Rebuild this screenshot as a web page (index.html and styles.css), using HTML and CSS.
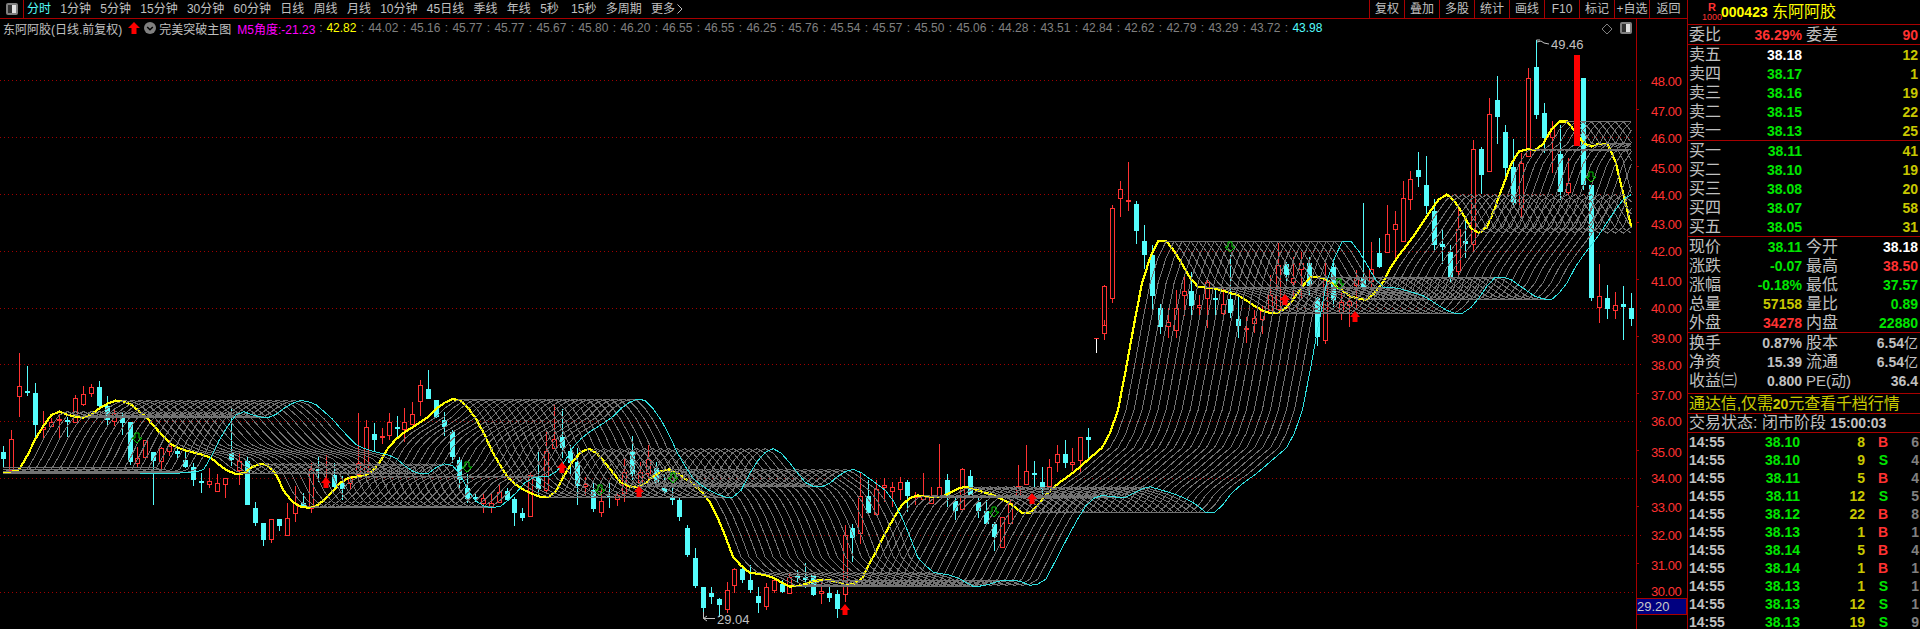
FILE: index.html
```html
<!DOCTYPE html>
<html lang="zh-CN">
<head>
<meta charset="utf-8">
<title>东阿阿胶 K线</title>
<link rel="stylesheet" href="styles.css">
</head>
<body>
<div class="app">
  <main class="main">
    <header class="topbar">
      <button class="panel-toggle" aria-label="toggle">
        <svg width="12" height="12" viewBox="0 0 12 12"><rect class="ico-frame" x="0" y="0" width="12" height="12" rx="2"/><rect class="ico-dark" x="2" y="2" width="4" height="8"/><rect class="ico-light" x="6" y="2" width="4" height="8"/></svg>
      </button>
      <nav class="tabs">
        <span class="tab active">分时</span><span class="tab">1分钟</span><span class="tab">5分钟</span><span class="tab">15分钟</span><span class="tab">30分钟</span><span class="tab">60分钟</span><span class="tab">日线</span><span class="tab">周线</span><span class="tab">月线</span><span class="tab">10分钟</span><span class="tab">45日线</span><span class="tab">季线</span><span class="tab">年线</span><span class="tab tab-sec">5秒</span><span class="tab">15秒</span><span class="tab">多周期</span>
        <span class="tab">更多<svg class="chev" width="6" height="10" viewBox="0 0 6 10"><path d="M0.5 0.5 L5 5 L0.5 9.5"/></svg></span>
      </nav>
      <div class="tools">
        <span class="tool">复权</span><span class="tool">叠加</span><span class="tool">多股</span><span class="tool">统计</span><span class="tool">画线</span><span class="tool">F10</span><span class="tool">标记</span><span class="tool">+自选</span><span class="tool tool-last">返回</span>
      </div>
    </header>
    <section class="chart">
      <svg id="kline" class="kline" viewBox="0 19 1687 610" width="1687" height="610"></svg>
      <div class="info">
        <span class="info-name">东阿阿胶(日线.前复权)</span>
        <svg class="info-arrow" width="12" height="12" viewBox="0 0 12 12"><path d="M6 0 L12 6 L8.5 6 L8.5 12 L3.5 12 L3.5 6 L0 6 Z"/></svg>
        <svg class="info-circle" width="12" height="12" viewBox="0 0 12 12"><circle cx="6" cy="6" r="6"/><path d="M3.2 5 L6 7.8 L8.8 5"/></svg>
        <span class="info-name">完美突破主图</span>
        <span class="m5">M5角度:-21.23</span><span class="sep m5-sep">:</span><span class="v y">42.82</span>
        <span class="sep">:</span><span class="v">44.02</span><span class="sep">:</span><span class="v">45.16</span><span class="sep">:</span><span class="v">45.77</span><span class="sep">:</span><span class="v">45.77</span><span class="sep">:</span><span class="v">45.67</span><span class="sep">:</span><span class="v">45.80</span><span class="sep">:</span><span class="v">46.20</span><span class="sep">:</span><span class="v">46.55</span><span class="sep">:</span><span class="v">46.55</span><span class="sep">:</span><span class="v">46.25</span><span class="sep">:</span><span class="v">45.76</span><span class="sep">:</span><span class="v">45.54</span><span class="sep">:</span><span class="v">45.57</span><span class="sep">:</span><span class="v">45.50</span><span class="sep">:</span><span class="v">45.06</span><span class="sep">:</span><span class="v">44.28</span><span class="sep">:</span><span class="v">43.51</span><span class="sep">:</span><span class="v">42.84</span><span class="sep">:</span><span class="v">42.62</span><span class="sep">:</span><span class="v">42.79</span><span class="sep">:</span><span class="v">43.29</span><span class="sep">:</span><span class="v">43.72</span><span class="sep">:</span><span class="v c">43.98</span>
      </div>
    </section>
  </main>
  <aside class="panel">
    <div class="head">
      <div class="mark"><span class="mark-r">R</span><span class="mark-n">1000</span></div>
      <span class="code">000423</span><span class="name">东阿阿胶</span>
    </div>
    <div class="block block-one">
      <div class="row"><span class="k">委比</span><span class="n red">36.29%</span><span class="k k2">委差</span><span class="n red">90</span></div>
    </div>
    <div class="block">
      <div class="row"><span class="k">卖五</span><span class="n white">38.18</span><span></span><span class="n olive">12</span></div>
      <div class="row"><span class="k">卖四</span><span class="n green">38.17</span><span></span><span class="n olive">1</span></div>
      <div class="row"><span class="k">卖三</span><span class="n green">38.16</span><span></span><span class="n olive">19</span></div>
      <div class="row"><span class="k">卖二</span><span class="n green">38.15</span><span></span><span class="n olive">22</span></div>
      <div class="row"><span class="k">卖一</span><span class="n green">38.13</span><span></span><span class="n olive">25</span></div>
    </div>
    <div class="block">
      <div class="row"><span class="k">买一</span><span class="n green">38.11</span><span></span><span class="n olive">41</span></div>
      <div class="row"><span class="k">买二</span><span class="n green">38.10</span><span></span><span class="n olive">19</span></div>
      <div class="row"><span class="k">买三</span><span class="n green">38.08</span><span></span><span class="n olive">20</span></div>
      <div class="row"><span class="k">买四</span><span class="n green">38.07</span><span></span><span class="n olive">58</span></div>
      <div class="row"><span class="k">买五</span><span class="n green">38.05</span><span></span><span class="n olive">31</span></div>
    </div>
    <div class="block">
      <div class="row"><span class="k">现价</span><span class="n green">38.11</span><span class="k k2">今开</span><span class="n white">38.18</span></div>
      <div class="row"><span class="k">涨跌</span><span class="n green">-0.07</span><span class="k k2">最高</span><span class="n red">38.50</span></div>
      <div class="row"><span class="k">涨幅</span><span class="n green">-0.18%</span><span class="k k2">最低</span><span class="n green">37.57</span></div>
      <div class="row"><span class="k">总量</span><span class="n olive">57158</span><span class="k k2">量比</span><span class="n green">0.89</span></div>
      <div class="row"><span class="k">外盘</span><span class="n red">34278</span><span class="k k2">内盘</span><span class="n green">22880</span></div>
    </div>
    <div class="block block-fin">
      <div class="row"><span class="k">换手</span><span class="n silver">0.87%</span><span class="k k2">股本</span><span class="n silver">6.54<i class="unit">亿</i></span></div>
      <div class="row"><span class="k">净资</span><span class="n silver">15.39</span><span class="k k2">流通</span><span class="n silver">6.54<i class="unit">亿</i></span></div>
      <div class="row"><span class="k">收益㈢</span><span class="n silver">0.800</span><span class="k k2 k-pe">PE(动)</span><span class="n silver">36.4</span></div>
    </div>
    <div class="promo">通达信,仅需<b>20</b>元查看千档行情</div>
    <div class="status">交易状态: 闭市阶段 <b>15:00:03</b></div>
    <div class="trades">
      <div class="t"><span class="n silver">14:55</span><span class="n green">38.10</span><span class="n olive">8</span><span class="n red">B</span><span class="n grey">6</span></div>
      <div class="t"><span class="n silver">14:55</span><span class="n green">38.10</span><span class="n olive">9</span><span class="n green">S</span><span class="n grey">4</span></div>
      <div class="t"><span class="n silver">14:55</span><span class="n green">38.11</span><span class="n olive">5</span><span class="n red">B</span><span class="n grey">4</span></div>
      <div class="t"><span class="n silver">14:55</span><span class="n green">38.11</span><span class="n olive">12</span><span class="n green">S</span><span class="n grey">5</span></div>
      <div class="t"><span class="n silver">14:55</span><span class="n green">38.12</span><span class="n olive">22</span><span class="n red">B</span><span class="n grey">8</span></div>
      <div class="t"><span class="n silver">14:55</span><span class="n green">38.13</span><span class="n olive">1</span><span class="n red">B</span><span class="n grey">1</span></div>
      <div class="t"><span class="n silver">14:55</span><span class="n green">38.14</span><span class="n olive">5</span><span class="n red">B</span><span class="n grey">4</span></div>
      <div class="t"><span class="n silver">14:55</span><span class="n green">38.14</span><span class="n olive">1</span><span class="n red">B</span><span class="n grey">1</span></div>
      <div class="t"><span class="n silver">14:55</span><span class="n green">38.13</span><span class="n olive">1</span><span class="n green">S</span><span class="n grey">1</span></div>
      <div class="t"><span class="n silver">14:55</span><span class="n green">38.13</span><span class="n olive">12</span><span class="n green">S</span><span class="n grey">1</span></div>
      <div class="t"><span class="n silver">14:55</span><span class="n green">38.13</span><span class="n olive">19</span><span class="n green">S</span><span class="n grey">9</span></div>
    </div>
  </aside>
</div>
<script src="chart.js"></script>
</body>
</html>
```
FILE: styles.css
```css
* { box-sizing: border-box; }
html, body { margin: 0; height: 100%; background: #000; overflow: hidden; }
body { font-family: "Liberation Sans", "Noto Sans CJK SC", sans-serif; color: #c0c0c0; }
.app { display: flex; width: 1920px; height: 629px; overflow: hidden; }
.main { width: 1687px; flex: none; display: flex; flex-direction: column; }

.topbar { display: flex; align-items: center; height: 19px; border-bottom: 1px solid #a80000; font-size: 12px; line-height: 18px; }
.panel-toggle { width: 24px; height: 18px; padding: 0 0 0 1px; background: #000; border: 0; border-right: 1px solid #a80000; display: flex; align-items: center; justify-content: center; }
.ico-frame { fill: #808080; }
.ico-dark { fill: #303030; }
.ico-light { fill: #e0e0e0; }
.tabs { display: flex; gap: 9.3px; padding-left: 3px; white-space: nowrap; }
.tab { color: #c0c0c0; display: inline-flex; align-items: center; }
.tab.active { color: #54fcfc; }
.tab-sec { margin-right: 3px; }
.chev { margin-left: 2px; fill: none; stroke: #c0c0c0; }
.tools { margin-left: auto; display: flex; height: 18px; }
.tool { width: 35px; border-left: 1px solid #a80000; text-align: center; color: #c0c0c0; }
.tool-last { width: 38px; }

.chart { position: relative; flex: 1; }
.kline { display: block; }
.info { position: absolute; left: 3px; top: 1px; display: flex; align-items: center; height: 16px; font-size: 12px; white-space: nowrap; }
.info-name { color: #c0c0c0; }
.info-arrow { margin: 0 4px 0 6px; fill: #ff0000; }
.info-circle { margin-right: 3px; }
.info-circle circle { fill: #808080; }
.info-circle path { fill: none; stroke: #000; stroke-width: 1.5; }
.m5 { color: #ff00ff; margin-left: 6px; }
.v { color: #808080; width: 30px; flex: none; }
.v.y { color: #ffff00; }
.v.c { color: #54fcfc; }
.sep { width: 12px; flex: none; text-align: center; color: #808080; }
.m5-sep { width: 11px; }

.panel { width: 233px; flex: none; border-left: 1px solid #a80000; overflow: hidden; height: 629px; }
.head { height: 25px; border-bottom: 1px solid #a80000; display: flex; align-items: center; padding-left: 15px; color: #ffff00; }
.mark { width: 18px; display: flex; flex-direction: column; align-items: center; color: #ff3232; }
.mark-r { font-size: 11px; line-height: 10px; font-weight: bold; }
.mark-n { font-size: 9px; line-height: 10px; }
.code { font-size: 14px; font-weight: bold; margin-left: 0; width: 51px; }
.name { font-size: 16px; line-height: 20px; }

.block { border-bottom: 1px solid #a80000; }
.block-fin { padding-bottom: 3px; }
.row { display: grid; grid-template-columns: 50px 63px 54px 62px; height: 19px; padding-left: 1px; align-items: center; white-space: nowrap; }
.k { font-size: 16px; line-height: 19px; color: #c0c0c0; }
.k2 { padding-left: 4px; }
.k-pe { font-size: 15px; }
.n { font-size: 14px; line-height: 18px; font-weight: bold; text-align: right; font-style: normal; }
.unit { font-size: 14px; font-weight: normal; font-style: normal; }
.red { color: #ff3232; }
.green { color: #00e600; }
.white { color: #ffffff; }
.olive { color: #c8c800; }
.silver { color: #c0c0c0; }
.grey { color: #808080; }

.promo { height: 20px; padding-left: 1px; border-bottom: 1px solid #a80000; font-size: 16px; line-height: 19px; letter-spacing: -0.1px; color: #c8c800; white-space: nowrap; }
.promo b { font-size: 14px; }
.status { height: 19px; padding-left: 1px; border-bottom: 1px solid #a80000; font-size: 16px; line-height: 18px; color: #c0c0c0; white-space: nowrap; }
.status b { font-size: 14px; }
.trades { display: block; }
.t { display: grid; grid-template-columns: 45px 66px 65px 23px 31px; height: 18px; padding-left: 1px; align-items: center; }
.t .n:first-child { text-align: left; }

.grid { stroke: #a00000; stroke-width: 1; stroke-dasharray: 1 3; fill: none; }
.axis { stroke: #a80000; stroke-width: 1; fill: none; }
.w-up { stroke: #ff3232; stroke-width: 1; }
.w-dn { stroke: #54fcfc; stroke-width: 1; }
.b-up { stroke: #ff3232; stroke-width: 1; fill: #000; }
.b-dn { fill: #54fcfc; }
.b-lim { fill: #ff0000; }
.w-white { stroke: #ffffff; stroke-width: 1; }
.rib { fill: none; stroke: #727272; stroke-width: 1; }
.rib-y { fill: none; stroke: #ffff00; stroke-width: 2.2; }
.rib-c { fill: none; stroke: #30e0e0; stroke-width: 1; }
.ar-up { fill: #ff0000; }
.ar-dn { fill: none; stroke: #00c800; stroke-width: 1; }
.ax-t { fill: #ff3232; font-size: 13px; letter-spacing: -0.45px; font-family: "Liberation Sans", sans-serif; }
.flag-t { fill: #c0c0c0; font-size: 13px; font-family: "Liberation Sans", sans-serif; }
.flag-l { fill: none; stroke: #c0c0c0; stroke-width: 1; }
.px-box { fill: #000080; stroke: #a80000; stroke-width: 1; }
.px-t { fill: #c8c8c8; font-size: 13px; font-family: "Liberation Sans", sans-serif; }
.mini { fill: none; stroke: #808080; stroke-width: 1; }
.mini-f { fill: #808080; }
.mini-d { fill: #303030; }
.mini-l { fill: #e0e0e0; }
```
FILE: chart.js
```js
// Candles traced per region: [zoomX, high, bodyTop, bodyBottom, low, kind] (3x coordinates relative to region origin)
const U = 'u', D = 'd';
const regions = [
  { ox: 0, oy: 340, c: [
    [10,318,336,357,385,D],[34,270,298,390,390,U],[58,40,138,167,230,U],[82,78,153,158,168,D],[106,128,159,255,290,D],
    [130,213,262,267,300,U],[154,235,245,257,262,U],[178,222,238,241,300,U],[202,230,240,243,290,D],[226,165,175,245,245,U],
    [250,138,163,191,198,U],[274,132,142,158,170,U],[298,123,141,198,210,D],[322,168,198,240,255,D],[342,205,220,242,258,U],
    [366,215,235,249,285,D],[390,245,247,365,375,D],[412,320,355,368,380,U],[436,300,301,350,355,U],[460,335,337,362,495,D],
    [484,320,325,362,388,U],[508,300,318,332,348,U],[530,320,333,342,360,D],[554,330,360,380,385,D],[578,370,382,420,438,D],
    [602,400,423,426,460,D],[626,385,424,431,445,U],[650,402,430,452,455,U],[674,415,415,431,475,U],[694,205,340,360,378,D],
    [718,340,363,390,435,U],[742,350,363,495,495,D],[766,487,504,549,558,D],[790,549,549,600,618,D],[814,538,538,597,608,U],
    [838,537,537,558,573,D],[860,490,534,584,584,U],[884,438,490,520,545,U],[908,458,490,497,503,D],[932,370,388,505,518,U],
    [955,350,387,393,425,D],[979,345,395,400,420,U],[1003,370,405,441,445,D],[1025,408,430,447,480,D],[1049,408,415,428,450,U],
    [1073,220,368,402,420,U],[1097,240,262,393,395,U],[1121,250,282,299,335,D],[1145,265,287,292,312,U],[1168,218,247,286,300,U],
    [1190,228,260,263,298,D]
  ]},
  { ox: 380, oy: 380, c: [
    [73,85,127,147,185,U],[97,67,103,132,135,U],[121,0,15,62,108,U],[145,-30,27,56,56,D],[169,60,60,110,115,D],[193,95,121,140,168,D],
    [215,150,157,230,250,D],[238,230,240,300,325,D],[262,283,325,357,370,D],[286,340,352,358,365,D],[310,340,354,368,398,U],
    [334,335,368,380,398,U],[358,310,337,367,370,U],[382,325,334,360,362,D],[403,350,357,398,437,D],[427,385,400,414,422,D],
    [451,280,285,407,410,U],[475,210,292,326,345,D],[499,150,213,330,335,U],[523,75,178,205,205,U],[547,87,170,203,235,D],
    [569,195,213,250,285,D],[592,205,246,318,375,D],[616,290,311,318,345,U],[640,305,330,386,395,D],[664,325,362,395,410,U],
    [688,300,348,354,385,D],[712,335,345,358,378,U],[733,235,275,340,365,U],[757,168,213,282,300,D],[781,245,276,305,312,U],
    [805,195,238,278,300,U],[829,245,265,310,325,D],[853,285,325,335,340,D],[877,320,355,358,375,D]
  ]},
  { ox: 660, oy: 400, c: [
    [58,295,300,350,362,D],[82,375,384,464,470,D],[106,445,475,557,563,D],[130,560,561,624,655,D],[154,560,579,590,612,D],
    [178,595,598,615,650,D],[202,545,571,628,638,U],[223,505,508,556,578,U],[247,500,508,540,550,D],[271,495,540,570,580,D],
    [295,560,588,608,638,D],[319,550,562,617,630,U],[343,530,541,569,578,U],[367,540,553,575,580,D],[388,520,530,578,580,U],
    [412,510,528,533,550,D],[436,490,530,541,565,D],[460,525,525,584,587,D],[484,550,574,579,612,U],[508,555,579,593,605,D],
    [532,570,582,628,653,D],[556,375,406,581,605,U],[577,372,385,414,485,D],[601,215,289,398,432,U],[625,240,288,338,340,D],
    [649,240,268,341,342,U],[673,235,256,262,305,U],[697,245,260,272,320,U],[721,230,247,268,300,U],[742,240,246,288,335,D],
    [766,275,288,292,315,U],[790,220,284,298,300,U],[814,262,292,308,310,U],[838,132,262,292,295,U],[862,222,240,285,322,D],
    [886,290,304,334,360,D],[907,205,208,327,328,U],[931,210,228,285,285,D],[955,290,306,332,355,D],[979,300,334,372,372,D],
    [1003,365,373,410,452,D],[1027,350,352,442,445,U],[1051,300,308,370,372,U],[1073,195,257,292,292,U],[1097,135,213,253,255,U],
    [1121,183,219,222,265,D],[1145,200,247,268,300,D],[1168,178,202,258,265,U],[1192,135,163,187,215,U]
  ]},
  { ox: 1040, oy: 330, c: [
    [76,330,373,398,414,D],[97,354,397,401,422,U],[121,322,322,391,430,U],[145,294,321,330,390,D]
  ]},
  { ox: 1050, oy: 150, c: [
    [163,405,408,548,570,U],[187,165,175,445,458,U],[211,93,118,143,200,U],[233,36,151,154,182,U],[257,152,162,243,282,D],
    [281,225,274,315,357,D],[305,285,316,437,476,D],[329,463,475,530,552,D],[353,475,517,529,565,U],[377,420,475,539,565,U],
    [401,375,424,436,498,U],[422,365,424,467,503,D],[446,435,466,472,503,U],[470,380,397,445,533,U],[494,410,444,447,503,D],
    [518,410,463,488,503,U],[541,315,447,488,503,D],[565,440,507,527,563,D],[587,500,535,538,578,U],[611,480,505,520,550,U],
    [635,465,483,506,552,U],[659,375,435,480,480,U],[683,280,345,478,480,U],[707,335,343,375,405,D],[730,320,385,395,450,U],
    [752,305,340,358,447,U],[776,320,338,408,438,D],[800,440,445,560,588,D],[824,335,390,570,582,U],[848,330,350,450,470,D],
    [872,425,455,487,510,U],[896,435,452,465,530,U],[918,360,380,405,475,U],[940,160,385,415,420,D],[964,275,358,392,423,U],
    [988,265,310,352,355,D]
  ]},
  { ox: 1380, oy: 30, c: [
    [22,525,613,665,665,U],[46,543,583,598,695,U],[70,453,505,632,632,U],[91,423,448,506,540,U],[115,365,420,440,470,D],
    [139,378,465,527,552,D],[163,508,543,645,662,D],[187,595,642,650,702,D],[211,645,666,740,760,D],[235,530,598,722,740,U],
    [256,572,632,642,685,D],[280,330,358,643,670,U],[304,350,357,435,492,D],[328,205,253,422,422,U],[352,138,210,260,342,D],
    [376,285,306,413,445,D],[400,328,412,518,530,D],[424,370,400,530,560,U],[445,115,145,378,380,U],[469,30,110,255,268,D],
    [493,220,250,323,370,D],[517,273,295,322,430,U],[541,285,372,487,510,D],[565,385,460,487,498,U],[610,145,145,465,480,D],
    [634,465,465,803,812,D],[658,703,799,830,878,U],[682,766,805,836,868,D],[706,785,826,841,868,U],[730,768,822,830,930,D],
    [754,790,833,868,888,D]
  ]}
];

// Thick MA line traced in page pixels
const key = [
  [18,471],[23,465],[33,443],[42,428],[50,416],[58,411],[68,415],[80,418],[88,417],[100,408],[112,401],[120,400],[132,405],
  [147,418],[160,433],[173,446],[187,451],[200,454],[210,457],[223,468],[233,474],[243,474],[255,465],[263,463],[273,468],
  [283,490],[295,505],[305,508],[315,507],[328,497],[340,483],[350,477],[367,476],[377,467],[388,448],[400,435],[413,427],
  [427,418],[440,405],[452,399],[460,400],[470,410],[480,425],[493,453],[507,477],[520,488],[530,493],[540,497],[550,497],
  [557,490],[567,470],[577,455],[587,448],[595,451],[607,465],[620,482],[630,487],[640,487],[647,482],[657,473],[667,469],
  [673,470],[687,480],[703,492],[713,507],[723,530],[733,557],[747,572],[770,576],[790,587],[803,585],[817,580],[833,580],
  [847,586],[860,582],[873,557],[887,530],[900,507],[913,495],[940,498],[963,486],[977,490],[993,495],[1010,503],[1023,514],
  [1033,512],[1047,493],[1060,482],[1073,473],[1090,458],[1103,447],[1113,427],[1120,403],[1127,363],[1133,330],[1142,283],
  [1152,252],[1158,241],[1167,241],[1177,255],[1190,278],[1198,287],[1213,288],[1230,293],[1240,296],[1253,305],[1267,313],
  [1277,314],[1290,305],[1300,289],[1311,277],[1323,277],[1337,287],[1353,298],[1367,300],[1380,288],[1393,263],[1413,237],
  [1433,207],[1443,194]
];

const W = 8.02, X0 = 3.3, BARS = 204;
const priceY = p => 80.3 + (48 - p) * 28.4;
const tail = [43.98,43.72,43.29,42.79,42.62,42.84,43.51,44.28,45.06,45.50,45.57,45.54,45.76,46.25,46.55,46.55,46.20,45.80,45.67,45.77,45.77,45.16,44.02,42.82];

function interp(x) {
  if (x <= key[0][0]) return 472;
  for (let j = 1; j < key.length; j++) {
    if (x <= key[j][0]) {
      const [a, b] = key[j - 1], [c, d] = key[j];
      return b + (d - b) * (x - a) / (c - a);
    }
  }
  return key[key.length - 1][1];
}
const yel = [];
for (let i = 0; i < BARS; i++) yel.push(interp(X0 + W * i));
tail.forEach((p, n) => { yel[BARS - tail.length + n] = priceY(p); });

const out = [];
// Grid and axis
for (let p = 30; p <= 48; p++) {
  const y = Math.round(priceY(p)) + 0.5;
  if (p % 2 === 0) out.push(`<line class="grid" x1="0" y1="${y}" x2="1641" y2="${y}"/>`);
  else out.push(`<line class="axis" x1="1636" y1="${y}" x2="1639" y2="${y}"/>`);
}
out.push('<line class="axis" x1="1636.5" y1="19" x2="1636.5" y2="629"/>');

// Candles
function candle(cx, hi, top, bot, lo, kind) {
  const x = Math.round(cx);
  const w = kind === U ? 'w-up' : 'w-dn';
  let s = `<line class="${w}" x1="${x + 0.5}" y1="${hi}" x2="${x + 0.5}" y2="${lo}"/>`;
  const h = Math.max(bot - top, 1);
  if (kind === U) s += `<rect class="b-up" x="${x - 2 + 0.5}" y="${top + 0.5}" width="4" height="${Math.round(h)}"/>`;
  else s += `<rect class="b-dn" x="${x - 2}" y="${top}" width="5" height="${Math.max(Math.round(h), 2)}"/>`;
  return s;
}
const rd = v => Math.round(v);
regions.forEach(r => r.c.forEach(c => {
  out.push(candle(r.ox + c[0] / 3, rd(r.oy + c[1] / 3), rd(r.oy + c[2] / 3), rd(r.oy + c[3] / 3), rd(r.oy + c[4] / 3), c[5]));
}));
// The stray white tick with red cap near x=1096
out.push('<line class="w-white" x1="1096.5" y1="339" x2="1096.5" y2="353"/><line class="w-up" x1="1094" y1="338.5" x2="1099" y2="338.5"/>');
// Small candle that tops the rally gap
out.push(candle(1104, 320, 325, 333, 340, U));

// Ribbon: each line is the previous line delayed by one bar
const pts = (k, start) => {
  const a = [];
  for (let i = start; i < BARS; i++) {
    const y = i >= k ? yel[i - k] : 467 + (k % 4) * 2;
    a.push(`${(X0 + W * i).toFixed(1)},${y.toFixed(1)}`);
  }
  return a.join(' ');
};
out.push(`<polyline class="rib-y" shape-rendering="crispEdges" points="${pts(0, 0)}"/>`);
for (let k = 1; k <= 22; k++) out.push(`<polyline class="rib" shape-rendering="crispEdges" points="${pts(k, 0)}"/>`);
out.push(`<polyline class="rib-c" shape-rendering="crispEdges" points="${pts(23, 17)}"/>`);

// Limit-up bar sits on top of the lines
out.push('<rect class="b-lim" x="1574" y="55" width="6" height="91"/>');

// Markers
const redUp = (x, y) => `<path class="ar-up" d="M${x} ${y - 6} L${x + 5} ${y} L${x + 2.5} ${y} L${x + 2.5} ${y + 5} L${x - 2.5} ${y + 5} L${x - 2.5} ${y} L${x - 5} ${y} Z"/>`;
const grnDn = (x, y) => `<path class="ar-dn" d="M${x - 2} ${y - 5} L${x + 2} ${y - 5} L${x + 2} ${y} L${x + 5} ${y} L${x} ${y + 5} L${x - 5} ${y} L${x - 2} ${y} Z"/>`;
[[326,483],[562,468],[639,492],[845,610],[1032,499],[1285,300],[1355,317]].forEach(p => out.push(redUp(p[0], p[1])));
[[137,438],[467,467],[600,490],[673,478],[994,512],[1230,247],[1339,284],[1591,177]].forEach(p => out.push(grnDn(p[0], p[1])));

// Axis labels
const labels = { 48:81, 47:111, 46:138, 45:168, 44:195, 43:224, 42:251, 41:281, 40:308, 39:338, 38:365, 37:395, 36:421, 35:452, 34:478, 33:507, 32:535, 31:565, 30:591 };
Object.keys(labels).forEach(p => {
  out.push(`<text class="ax-t" x="1651" y="${labels[p] + 5}">${Number(p).toFixed(2)}</text>`);
});
// Cursor price box
out.push('<rect class="px-box" x="1636.5" y="598.5" width="50" height="16"/><text class="px-t" x="1637" y="611">29.20</text>');

// High / low flags
out.push('<path class="flag-l" d="M1536.5 40 L1540 40 M1537 42 L1541 41 L1544 43 L1549 44"/><text class="flag-t" x="1551" y="49">49.46</text>');
out.push('<path class="flag-l" d="M703.5 612 L703.5 618.5 L715 618.5 M703.5 618.5 L707 616 M703.5 618.5 L707 621"/><text class="flag-t" x="717" y="624">29.04</text>');

// Corner icons
out.push('<path class="mini" d="M1607 24 L1612 29 L1607 34 L1602 29 Z"/>');
out.push('<rect class="mini-f" x="1620" y="22" width="12" height="12" rx="2"/><rect class="mini-d" x="1622" y="24" width="4" height="8"/><rect class="mini-l" x="1626" y="24" width="4" height="8"/>');

document.getElementById('kline').innerHTML = out.join('');
```
